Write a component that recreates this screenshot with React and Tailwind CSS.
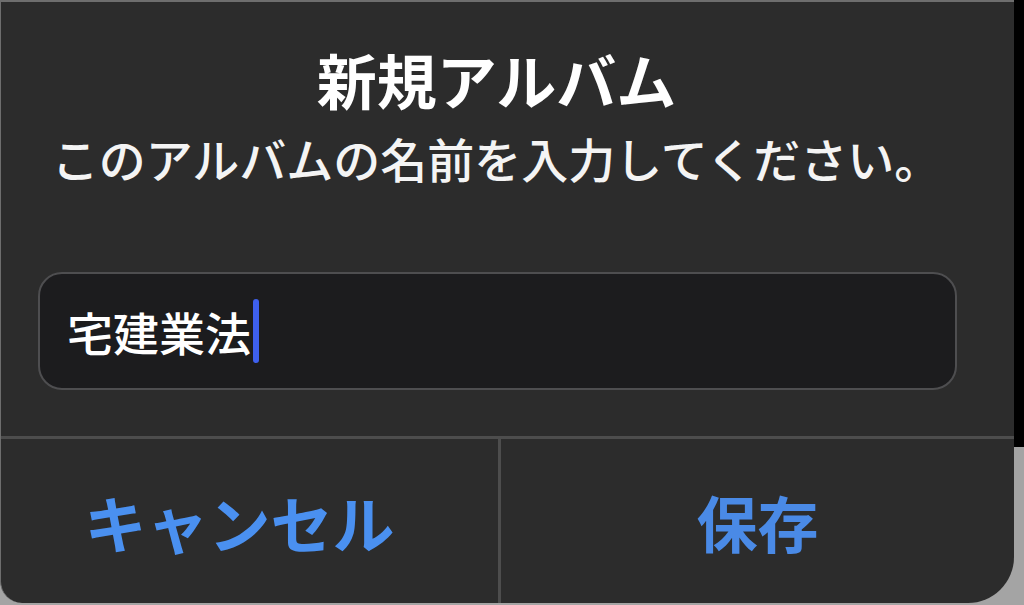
export default function App() {
  const jp = { fontFamily: '"Noto Sans CJK JP", "Noto Sans", sans-serif' };
  return (
    <div className="w-[1024px] h-[605px] bg-[#a4a4a4] flex overflow-hidden" style={jp}>
      <div className="w-[1014px] h-[603px] bg-[#2c2c2c] rounded-bl-[22px] rounded-br-[46px] border-t-2 border-l border-[#6e6e6e] flex flex-col overflow-hidden">
        <div className="flex flex-col items-center pt-[42px] pr-[22px]">
          <div className="text-[60px] leading-[70px] font-bold text-white">新規アルバム</div>
          <div className="mt-[16px] text-[47px] leading-[56px] font-medium text-[#f4f4f4]">このアルバムの名前を入力してください。</div>
        </div>
        <div className="mt-[86px] ml-[37px] w-[919px] h-[118px] rounded-[24px] border-2 border-[#4e4e50] bg-[#1c1c1e] flex items-center pl-[27px]">
          <span className="text-[46px] leading-[56px] text-white font-medium">宅建業法</span>
          <span className="ml-[2px] w-[6px] h-[64px] rounded-full bg-[#3e60ee]" />
        </div>
        <div className="mt-[46px] h-[3px] bg-[#4d4d4d]" />
        <div className="flex-1 flex">
          <div className="w-[497px] flex items-center justify-center pr-[20px]">
            <span className="text-[62px] leading-[72px] font-bold text-[#4a90f0] mt-[2px]">キャンセル</span>
          </div>
          <div className="w-[3px] bg-[#4d4d4d]" />
          <div className="flex-1 flex items-center justify-center">
            <span className="text-[61px] leading-[72px] font-bold text-[#4a8ae6] mt-[2px]">保存</span>
          </div>
        </div>
      </div>
      <div className="flex-1 flex flex-col">
        <div className="h-[447px] bg-black" />
      </div>
    </div>
  );
}
